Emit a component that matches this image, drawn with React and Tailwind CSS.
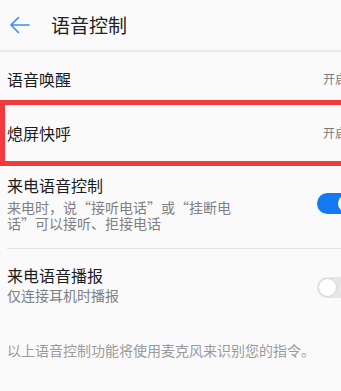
import React from "react";

const font = { fontFamily: '"Noto Sans CJK SC", "Noto Sans", sans-serif' };

export default function App() {
  return (
    <div className="w-[341px] h-[391px] overflow-hidden bg-[#fafafa]" style={font}>
      <div className="w-[380px]">
        {/* Header */}
        <div className="h-[50px] flex items-center border-b-[2px] border-[#e8e8e8] box-content">
          <svg className="ml-[9px] w-[21px] h-[18px]" viewBox="0 0 21 18" fill="none">
            <path d="M20 9H2M9.5 1.5L2 9l7.5 7.5" stroke="#3b8ee8" strokeWidth="1.6" strokeLinecap="round" strokeLinejoin="round" />
          </svg>
          <span className="ml-[21px] text-[19px] leading-[26px] text-[#222]">语音控制</span>
        </div>

        {/* Row 1 */}
        <div className="h-[48px] pt-[6px] flex items-center justify-between pl-[7px] pr-[33px]">
          <span className="text-[16px] leading-[22px] text-[#1c1c1c]">语音唤醒</span>
          <span className="text-[12px] leading-[16px] text-[#7a7a7a]">开启</span>
        </div>

        {/* Row 2 highlighted */}
        <div className="h-[66px] border-[5px] border-[#f23a3e] flex items-center justify-between pl-[2px] pr-[28px]">
          <span className="text-[16px] leading-[22px] text-[#1c1c1c]">熄屏快呼</span>
          <span className="text-[12px] leading-[16px] text-[#7a7a7a]">开启</span>
        </div>

        {/* Row 3 */}
        <div className="ml-[7px] h-[82px] flex justify-between border-b border-[#e3e3e3] box-content">
          <div className="pt-[8px]">
            <div className="text-[16px] leading-[22px] text-[#1c1c1c]">来电语音控制</div>
            <div className="mt-[3px] w-[232px] text-[14px] leading-[16px] text-[#808080]">
              来电时，说“接听电话”或“挂断电话”可以接听、拒接电话
            </div>
          </div>
          <div className="mt-[27px] mr-[23px] w-[40px] h-[21px] rounded-full bg-[#1479f2] flex items-center justify-end pr-[2px]">
            <div className="w-[17px] h-[17px] rounded-full bg-white" />
          </div>
        </div>

        {/* Row 4 */}
        <div className="ml-[7px] flex justify-between">
          <div className="pt-[15px]">
            <div className="text-[16px] leading-[22px] text-[#1c1c1c]">来电语音播报</div>
            <div className="mt-[1px] text-[14px] leading-[16px] text-[#808080]">仅连接耳机时播报</div>
          </div>
          <div className="mt-[28px] mr-[23px] w-[40px] h-[21px] rounded-full bg-[#e6e6e6] flex items-center pl-[1px]">
            <div className="w-[19px] h-[19px] rounded-full bg-white border border-[#d6d6d6]" />
          </div>
        </div>

        {/* Footer */}
        <div className="pl-[7px] mt-[39px] text-[14px] leading-[16px] text-[#9a9a9a]">
          以上语音控制功能将使用麦克风来识别您的指令。
        </div>
      </div>
    </div>
  );
}
